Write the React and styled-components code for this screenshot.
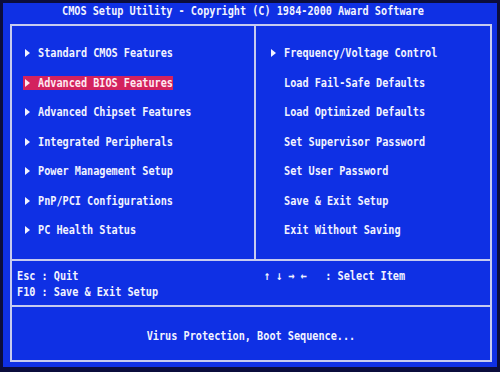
import React from 'react';
import styled, { createGlobalStyle } from 'styled-components';

const COLORS = {
  bezel: '#0b0d3c',
  blue: '#0f30e4',
  line: '#c6cbef',
  text: '#f2f3ff',
  highlight: '#d3225e',
  highlightText: '#ffe9f1',
};

const GlobalStyle = createGlobalStyle`
  html, body {
    margin: 0;
    padding: 0;
    background: ${COLORS.bezel};
  }
  * {
    box-sizing: border-box;
  }
`;

const leftMenu = [
  { text: 'Standard CMOS Features', sub: true },
  { text: 'Advanced BIOS Features', sub: true, active: true },
  { text: 'Advanced Chipset Features', sub: true },
  { text: 'Integrated Peripherals', sub: true },
  { text: 'Power Management Setup', sub: true },
  { text: 'PnP/PCI Configurations', sub: true },
  { text: 'PC Health Status', sub: true },
];

const rightMenu = [
  { text: 'Frequency/Voltage Control', sub: true },
  { text: 'Load Fail-Safe Defaults' },
  { text: 'Load Optimized Defaults' },
  { text: 'Set Supervisor Password' },
  { text: 'Set User Password' },
  { text: 'Save & Exit Setup' },
  { text: 'Exit Without Saving' },
];

const MenuColumn = ({ items, divider }) => (
  <MenuList $divider={divider}>
    {items.map(({ text, sub, active }) => (
      <MenuItem key={text} $active={active}>
        <ArrowSlot>{sub && <Arrow />}</ArrowSlot>
        <Label>{text}</Label>
      </MenuItem>
    ))}
  </MenuList>
);

const App = () => {
  return (
    <>
      <GlobalStyle />
      <Screen>
        <Display>
          <TitleBar>
            <Label>CMOS Setup Utility - Copyright (C) 1984-2000 Award Software</Label>
          </TitleBar>
          <Frame>
            <MenuArea>
              <MenuColumn items={leftMenu} divider />
              <MenuColumn items={rightMenu} />
            </MenuArea>
            <HelpArea>
              <HelpBlock $pad={5}>
                <Label>Esc : Quit</Label>
                <Label>F10 : Save &amp; Exit Setup</Label>
              </HelpBlock>
              <HelpBlock $pad={8}>
                <Label>{'\u2191 \u2193 \u2192 \u2190   : Select Item'}</Label>
              </HelpBlock>
            </HelpArea>
            <Footer>
              <Label>Virus Protection, Boot Sequence...</Label>
            </Footer>
          </Frame>
        </Display>
      </Screen>
    </>
  );
};

export default App;

const Screen = styled.div`
  width: 500px;
  height: 372px;
  padding: 3px 3px 5px 3px;
  background: ${COLORS.bezel};
  display: flex;
  flex-direction: column;
  font-family: 'DejaVu Sans Mono', 'Liberation Mono', monospace;
  font-weight: bold;
  font-size: 10.2px;
  color: ${COLORS.text};
`;

const Display = styled.div`
  flex: 1;
  background: ${COLORS.blue};
  padding: 0 5px 5px 7px;
  display: flex;
  flex-direction: column;
`;

const TitleBar = styled.div`
  height: 21px;
  padding: 3px 16px 0 0;
  display: flex;
  justify-content: center;
  white-space: pre;
`;

const Label = styled.span`
  display: inline-block;
  white-space: pre;
  line-height: 12px;
  transform: scaleY(1.25);
`;

const Frame = styled.div`
  flex: 1;
  border: 2px solid ${COLORS.line};
  display: flex;
  flex-direction: column;
`;

const MenuArea = styled.div`
  height: 233px;
  display: grid;
  grid-template-columns: 244px 1fr;
`;

const MenuList = styled.div`
  display: flex;
  flex-direction: column;
  align-items: flex-start;
  gap: 15.5px;
  padding: 20px 0 0 ${({ $divider }) => ($divider ? 11 : 13)}px;
  border-right: ${({ $divider }) => ($divider ? `2px solid ${COLORS.line}` : 'none')};
`;

const MenuItem = styled.div`
  height: 14px;
  display: flex;
  align-items: center;
  padding-left: 2px;
  background: ${({ $active }) => ($active ? COLORS.highlight : 'transparent')};
  color: ${({ $active }) => ($active ? COLORS.highlightText : COLORS.text)};
`;

const ArrowSlot = styled.span`
  width: 13px;
  display: flex;
  align-items: center;
`;

const Arrow = styled.span`
  width: 0;
  height: 0;
  border-top: 4px solid transparent;
  border-bottom: 4px solid transparent;
  border-left: 5px solid currentColor;
`;

const HelpArea = styled.div`
  height: 46px;
  border-top: 2px solid ${COLORS.line};
  display: grid;
  grid-template-columns: 244px 1fr;
`;

const HelpBlock = styled.div`
  display: flex;
  flex-direction: column;
  align-items: flex-start;
  gap: 4px;
  padding: 9px 0 0 ${({ $pad }) => $pad}px;
`;

const Footer = styled.div`
  flex: 1;
  border-top: 2px solid ${COLORS.line};
  display: flex;
  align-items: center;
  justify-content: center;
  padding-top: 4px;
`;
